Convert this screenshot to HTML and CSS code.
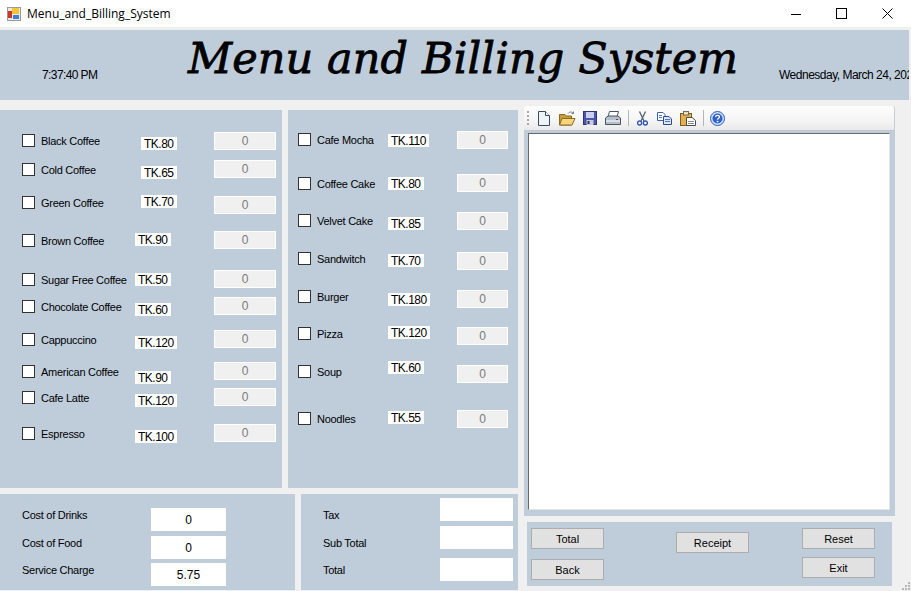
FILE: index.html
```html
<!DOCTYPE html>
<html lang="en">
<head>
    <meta charset="UTF-8">
    <title>Menu_and_Billing_System</title>
    <link rel="stylesheet" href="styles.css">
</head>
<body>
    <!-- Title bar -->
    <div class="titlebar">
        <svg class="app-icon" width="14" height="14" viewBox="0 0 14 14">
            <rect x="0.5" y="0.5" width="13" height="13" fill="#e8e8e8" stroke="#9a9a9a"/>
            <rect x="1" y="4" width="4" height="7" fill="#d0342c"/>
            <rect x="5" y="1" width="7" height="6" fill="#f6c52f"/>
            <rect x="6" y="8" width="6" height="4" fill="#3f7fd8"/>
        </svg>
        <span class="app-name">Menu_and_Billing_System</span>
        <div class="win-buttons">
            <svg width="10" height="10" viewBox="0 0 10 10"><path d="M0 5.5H10" stroke="#000" fill="none"/></svg>
            <svg width="11" height="11" viewBox="0 0 11 11"><rect x="0.5" y="0.5" width="10" height="10" stroke="#000" fill="none"/></svg>
            <svg width="11" height="11" viewBox="0 0 11 11"><path d="M0.5 0.5L10.5 10.5M10.5 0.5L0.5 10.5" stroke="#000" fill="none"/></svg>
        </div>
    </div>

    <!-- Header -->
    <div class="header">
        <div class="clock">7:37:40 PM</div>
        <h1>Menu and Billing System</h1>
        <div class="date">Wednesday, March 24, 2021</div>
    </div>

    <div class="content">
        <div class="left-side">
            <div class="menus">
                <!-- Drinks -->
                <div class="panel drinks">
                    <div class="row"><label class="item m2"><input type="checkbox"><span>Black Coffee</span></label><span class="price far m5">TK.80</span><input class="qty" value="0" disabled></div>
                    <div class="row"><label class="item m3"><input type="checkbox"><span>Cold Coffee</span></label><span class="price far m6">TK.65</span><input class="qty" value="0" disabled></div>
                    <div class="row"><label class="item m0"><input type="checkbox"><span>Green Coffee</span></label><span class="price far mn1">TK.70</span><input class="qty" value="0" disabled></div>
                    <div class="row"><label class="item m3"><input type="checkbox"><span>Brown Coffee</span></label><span class="price m2">TK.90</span><input class="qty" value="0" disabled></div>
                    <div class="row"><label class="item m3"><input type="checkbox"><span>Sugar Free Coffee</span></label><span class="price m3">TK.50</span><input class="qty" value="0" disabled></div>
                    <div class="row"><label class="item m3"><input type="checkbox"><span>Chocolate Coffee</span></label><span class="price m6">TK.60</span><input class="qty" value="0" disabled></div>
                    <div class="row"><label class="item m3"><input type="checkbox"><span>Cappuccino</span></label><span class="price m6">TK.120</span><input class="qty" value="0" disabled></div>
                    <div class="row"><label class="item m3"><input type="checkbox"><span>American Coffee</span></label><span class="price m9">TK.90</span><input class="qty" value="0" disabled></div>
                    <div class="row"><label class="item m3"><input type="checkbox"><span>Cafe Latte</span></label><span class="price m6">TK.120</span><input class="qty" value="0" disabled></div>
                    <div class="row"><label class="item m3"><input type="checkbox"><span>Espresso</span></label><span class="price m6">TK.100</span><input class="qty" value="0" disabled></div>
                </div>

                <!-- Food -->
                <div class="panel foods">
                    <div class="row"><label class="item m2"><input type="checkbox"><span>Cafe Mocha</span></label><span class="price m3">TK.110</span><input class="qty" value="0" disabled></div>
                    <div class="row"><label class="item m3"><input type="checkbox"><span>Coffee Cake</span></label><span class="price m3">TK.80</span><input class="qty" value="0" disabled></div>
                    <div class="row"><label class="item m2"><input type="checkbox"><span>Velvet Cake</span></label><span class="price m5">TK.85</span><input class="qty" value="0" disabled></div>
                    <div class="row"><label class="item m0"><input type="checkbox"><span>Sandwitch</span></label><span class="price m2">TK.70</span><input class="qty" value="0" disabled></div>
                    <div class="row"><label class="item m0"><input type="checkbox"><span>Burger</span></label><span class="price m3">TK.180</span><input class="qty" value="0" disabled></div>
                    <div class="row"><label class="item m0"><input type="checkbox"><span>Pizza</span></label><span class="price mn1">TK.120</span><input class="qty" value="0" disabled></div>
                    <div class="row"><label class="item m0"><input type="checkbox"><span>Soup</span></label><span class="price mn4">TK.60</span><input class="qty" value="0" disabled></div>
                    <div class="row"><label class="item m2"><input type="checkbox"><span>Noodles</span></label><span class="price m1">TK.55</span><input class="qty" value="0" disabled></div>
                </div>
            </div>

            <div class="totals">
                <div class="panel costs">
                    <div class="sum-row"><span class="sum-label">Cost of Drinks</span><input class="sum-box" value="0"></div>
                    <div class="sum-row"><span class="sum-label">Cost of Food</span><input class="sum-box" value="0"></div>
                    <div class="sum-row"><span class="sum-label">Service Charge</span><input class="sum-box" value="5.75"></div>
                </div>
                <div class="panel charges">
                    <div class="sum-row"><span class="sum-label">Tax</span><input class="sum-box"></div>
                    <div class="sum-row"><span class="sum-label">Sub Total</span><input class="sum-box"></div>
                    <div class="sum-row last"><span class="sum-label">Total</span><input class="sum-box"></div>
                </div>
            </div>
        </div>

        <div class="right-side">
            <!-- Toolbar -->
            <div class="toolbar">
                <span class="grip"></span>
                <svg class="tool tool-new" width="12" height="15" viewBox="0 0 12 15">
                    <path d="M0.5 0.5H7.5L11.5 4.5V14.5H0.5Z" fill="#eef2fa" stroke="#3c4a68"/>
                    <path d="M7.5 0.5V4.5H11.5" fill="#fff" stroke="#3c4a68"/>
                </svg>
                <svg class="tool tool-open" width="17" height="15" viewBox="0 0 17 15">
                    <path d="M0.5 3.5H6L7.5 5H12.5V14H0.5Z" fill="#c99a35" stroke="#8a6a24"/>
                    <path d="M3 7.5H16L13 14H0.5Z" fill="#f6d67c" stroke="#8a6a24"/>
                    <path d="M9 2.5C10.5 0.5 13 0.5 14.5 2.5M14.5 0.5V2.5H12.5" fill="none" stroke="#6f7f8f"/>
                </svg>
                <svg class="tool tool-save" width="14" height="14" viewBox="0 0 14 14">
                    <rect x="0.5" y="0.5" width="13" height="13" fill="#4d55a8" stroke="#2e3478"/>
                    <rect x="3" y="1" width="8" height="6" fill="#c9cff0"/>
                    <rect x="3.5" y="9" width="7" height="5" fill="#c9cbd8"/>
                    <rect x="4.5" y="10" width="2" height="3" fill="#2e3478"/>
                </svg>
                <svg class="tool tool-print" width="16" height="14" viewBox="0 0 16 14">
                    <path d="M4.5 0.5H13.5L12 6H3Z" fill="#fff" stroke="#4a5564"/>
                    <path d="M0.5 7L3 5H13L15.5 7V13.5H0.5Z" fill="#b4bfcd" stroke="#4a5564"/>
                    <path d="M1 10H15" stroke="#fff"/>
                    <rect x="11" y="8" width="2" height="1" fill="#a33"/>
                </svg>
                <span class="sep"></span>
                <svg class="tool tool-cut" width="11" height="15" viewBox="0 0 11 15">
                    <path d="M2.5 0.5L7 10M8.5 0.5L4 10" stroke="#5b6878" stroke-width="1.4" fill="none"/>
                    <circle cx="2.6" cy="12" r="2" fill="#fff" stroke="#2f55b0" stroke-width="1.4"/>
                    <circle cx="8.4" cy="12" r="2" fill="#fff" stroke="#2f55b0" stroke-width="1.4"/>
                </svg>
                <svg class="tool tool-copy" width="15" height="13" viewBox="0 0 15 13">
                    <path d="M0.5 0.5H6L8 2.5V8.5H0.5Z" fill="#fff" stroke="#3c62a8"/>
                    <path d="M6.5 4.5H12L14.5 7V12.5H6.5Z" fill="#dbe6f8" stroke="#2d4a8c"/>
                    <path d="M8 7.5H13M8 9.5H13M2 3.5H5M2 5.5H5" stroke="#4c74c0"/>
                </svg>
                <svg class="tool tool-paste" width="16" height="15" viewBox="0 0 16 15">
                    <rect x="0.5" y="2.5" width="11" height="12" fill="#e3b04b" stroke="#7a5c1e"/>
                    <rect x="3.5" y="0.5" width="5" height="3.5" fill="#f3e2b0" stroke="#6b6b6b"/>
                    <path d="M6.5 6.5H12L15.5 9.5V14.5H6.5Z" fill="#fff" stroke="#4b4b4b"/>
                    <path d="M8 10.5H14M8 12.5H14" stroke="#8a8a8a"/>
                </svg>
                <span class="sep"></span>
                <svg class="tool tool-help" width="15" height="15" viewBox="0 0 15 15">
                    <circle cx="7.5" cy="7.5" r="7" fill="#cfe0fa" stroke="#2c5cc0"/>
                    <circle cx="7.5" cy="7.5" r="5" fill="#2f62c8"/>
                    <path d="M5.6 6C5.7 3.9 9.5 3.9 9.5 6C9.5 7.4 7.5 7.2 7.5 8.8" stroke="#fff" stroke-width="1.3" fill="none"/>
                    <rect x="6.8" y="9.8" width="1.5" height="1.5" fill="#fff"/>
                </svg>
            </div>

            <div class="panel receipt-panel">
                <div class="receipt"></div>
            </div>

            <div class="panel actions">
                <div class="btn-col col-first">
                    <button>Total</button>
                    <button>Back</button>
                </div>
                <div class="btn-col col-mid">
                    <button>Receipt</button>
                </div>
                <div class="btn-col col-last">
                    <button>Reset</button>
                    <button>Exit</button>
                </div>
            </div>
        </div>
    </div>

    <!-- Resize grip -->
    <svg class="size-grip" width="9" height="9" viewBox="0 0 9 9">
        <path d="M7 1h2v2H7zM4 4h2v2H4zM7 4h2v2H7zM1 7h2v2H1zM4 7h2v2H4zM7 7h2v2H7z" fill="#b8b8b8"/>
    </svg>
</body>
</html>
```

FILE: styles.css
```css
* {
    box-sizing: border-box;
}

html, body {
    width: 911px;
    height: 591px;
    overflow: hidden;
}

body {
    margin: 0;
    background: #f0f0f0;
    font-family: "Liberation Sans", Arial, sans-serif;
    font-size: 11px;
    letter-spacing: -0.27px;
    color: #000;
}

/* Title bar */
.titlebar {
    display: flex;
    align-items: center;
    height: 27px;
    margin-bottom: 3px;
    padding-left: 7px;
    background: #fff;
}

.app-name {
    margin-left: 6px;
    font-family: "Open Sans", sans-serif;
    font-size: 12px;
    letter-spacing: normal;
}

.win-buttons {
    display: flex;
    align-items: center;
    gap: 35px;
    margin-left: auto;
    margin-right: 18px;
}

/* Header */
.header {
    display: flex;
    width: 909px;
    height: 70px;
    background: #bfcddb;
    overflow: hidden;
}

.clock {
    flex: none;
    width: 188px;
    margin-top: 38px;
    padding-left: 42px;
    font-size: 12px;
    letter-spacing: -0.6px;
    line-height: 14px;
}

h1 {
    flex: none;
    width: 591px;
    margin: 0;
    font-family: "DejaVu Serif", serif;
    font-size: 43px;
    font-style: italic;
    font-weight: normal;
    letter-spacing: 0.1px;
    line-height: 56px;
    white-space: nowrap;
    -webkit-text-stroke: 0.8px #000;
}

.date {
    flex: none;
    margin-top: 38px;
    font-size: 12px;
    letter-spacing: -0.5px;
    line-height: 14px;
    white-space: nowrap;
}

/* Main area */
.content {
    display: flex;
}

.left-side {
    width: 518px;
    padding-top: 10px;
}

.right-side {
    width: 371px;
    margin-left: 6px;
    padding-top: 6px;
}

.panel {
    background: #bfcddb;
}

.menus {
    display: flex;
    gap: 6px;
    height: 378px;
}

.drinks, .foods {
    display: grid;
    align-content: start;
}

.drinks {
    width: 282px;
    padding: 22px 6px 0 22px;
    grid-template-rows: 28px 36px 35px 39px 27px 33px 32px 26px 36px 18px;
}

.foods {
    width: 230px;
    padding: 21px 10px 0 10px;
    grid-template-rows: 43px 38px 40px 38px 37px 38px 45px 18px;
}

.row {
    display: flex;
    align-items: flex-start;
}

.item {
    display: flex;
    align-items: center;
    height: 13px;
    line-height: 13px;
    white-space: nowrap;
}

.item span {
    padding-top: 2px;
}

.drinks .item {
    width: 113px;
}

.foods .item {
    width: 90px;
}

.item input {
    appearance: none;
    width: 13px;
    height: 13px;
    margin: 0 6px 0 0;
    background: #fff;
    border: 1px solid #333;
    border-radius: 0;
}

.price {
    min-width: 36px;
    height: 13px;
    margin-right: auto;
    padding: 0 3px;
    background: #fff;
    font-size: 12px;
    letter-spacing: -0.5px;
    line-height: 14px;
}

.far {
    margin-left: 6px;
}

/* Vertical nudges: the form's controls don't sit on a common baseline */
.mn4 { margin-top: -4px; }
.mn1 { margin-top: -1px; }
.m0 { margin-top: 0; }
.m1 { margin-top: 1px; }
.m2 { margin-top: 2px; }
.m3 { margin-top: 3px; }
.m5 { margin-top: 5px; }
.m6 { margin-top: 6px; }
.m9 { margin-top: 9px; }

.qty {
    flex: none;
    height: 18px;
    margin: 0;
    padding: 0;
    background: #f0f0f0;
    border: 1px solid #fff;
    border-radius: 0;
    color: #7a7a7a;
    font-family: inherit;
    font-size: 12px;
    text-align: center;
    opacity: 1;
}

.drinks .qty {
    width: 62px;
}

.foods .qty {
    width: 51px;
}

/* Totals */
.totals {
    display: flex;
    gap: 6px;
    height: 96px;
    margin-top: 6px;
}

.costs {
    display: flex;
    flex-direction: column;
    width: 295px;
    padding: 14px 0 0 22px;
    gap: 5px;
}

.costs .sum-row:last-child {
    margin-top: -1px;
}

.charges {
    display: flex;
    flex-direction: column;
    width: 217px;
    padding: 4px 0 0 22px;
    gap: 4px;
}

.sum-row {
    display: flex;
    align-items: flex-start;
}

.sum-label {
    line-height: 14px;
    white-space: nowrap;
}

.costs .sum-label {
    width: 129px;
}

.charges .sum-label {
    width: 117px;
    margin-top: 10px;
}

.charges .last {
    margin-top: 4px;
}

.charges .last .sum-label {
    margin-top: 5px;
}

.sum-box {
    height: 23px;
    margin: 0;
    padding: 0;
    background: #fff;
    border: 0;
    font-family: inherit;
    font-size: 12px;
    text-align: center;
}

.costs .sum-box {
    width: 75px;
}

.charges .sum-box {
    width: 73px;
}

/* Toolbar */
.toolbar {
    display: flex;
    align-items: center;
    height: 25px;
    padding-left: 3px;
    background: linear-gradient(#fdfdfd, #f5f5f5 60%, #e9e9e9);
    border-bottom: 1px solid #c4c9d0;
    border-right: 1px solid #c9ced4;
    border-radius: 3px 3px 0 0;
}

.grip {
    width: 2px;
    height: 15px;
    background: repeating-linear-gradient(#a9a9a9 0 2px, transparent 2px 4px);
}

.sep {
    width: 1px;
    height: 16px;
    background: #b5b5b5;
}

.tool-new { margin-left: 9px; }
.tool-open { margin-left: 9px; }
.tool-save { margin-left: 7px; }
.tool-print { margin-left: 8px; }
.toolbar .sep { margin-left: 7px; }
.tool-cut { margin-left: 8px; }
.tool-copy { margin-left: 9px; }
.tool-paste { margin-left: 8px; }
.tool-help { margin-left: 6px; }

.receipt-panel {
    height: 385px;
    padding: 2px 5px 6px 4px;
}

.receipt {
    height: 100%;
    background: #fff;
    border: 1px solid #e4e4e4;
    border-top-color: #696969;
    border-left-color: #696969;
}

/* Buttons */
.actions {
    display: flex;
    width: 365px;
    height: 64px;
    margin-top: 6px;
    margin-left: 3px;
    padding-left: 4px;
}

.btn-col {
    display: flex;
    flex-direction: column;
}

.col-first {
    gap: 10px;
    padding-top: 6px;
}

.col-mid {
    margin-left: 72px;
    padding-top: 10px;
}

.col-last {
    gap: 8px;
    margin-left: 53px;
    padding-top: 6px;
}

button {
    width: 73px;
    height: 21px;
    padding: 0;
    background: #e1e1e1;
    border: 1px solid #adadad;
    font-family: inherit;
    font-size: 11px;
    color: #000;
}

.size-grip {
    position: absolute;
    right: 1px;
    bottom: 1px;
}
```
